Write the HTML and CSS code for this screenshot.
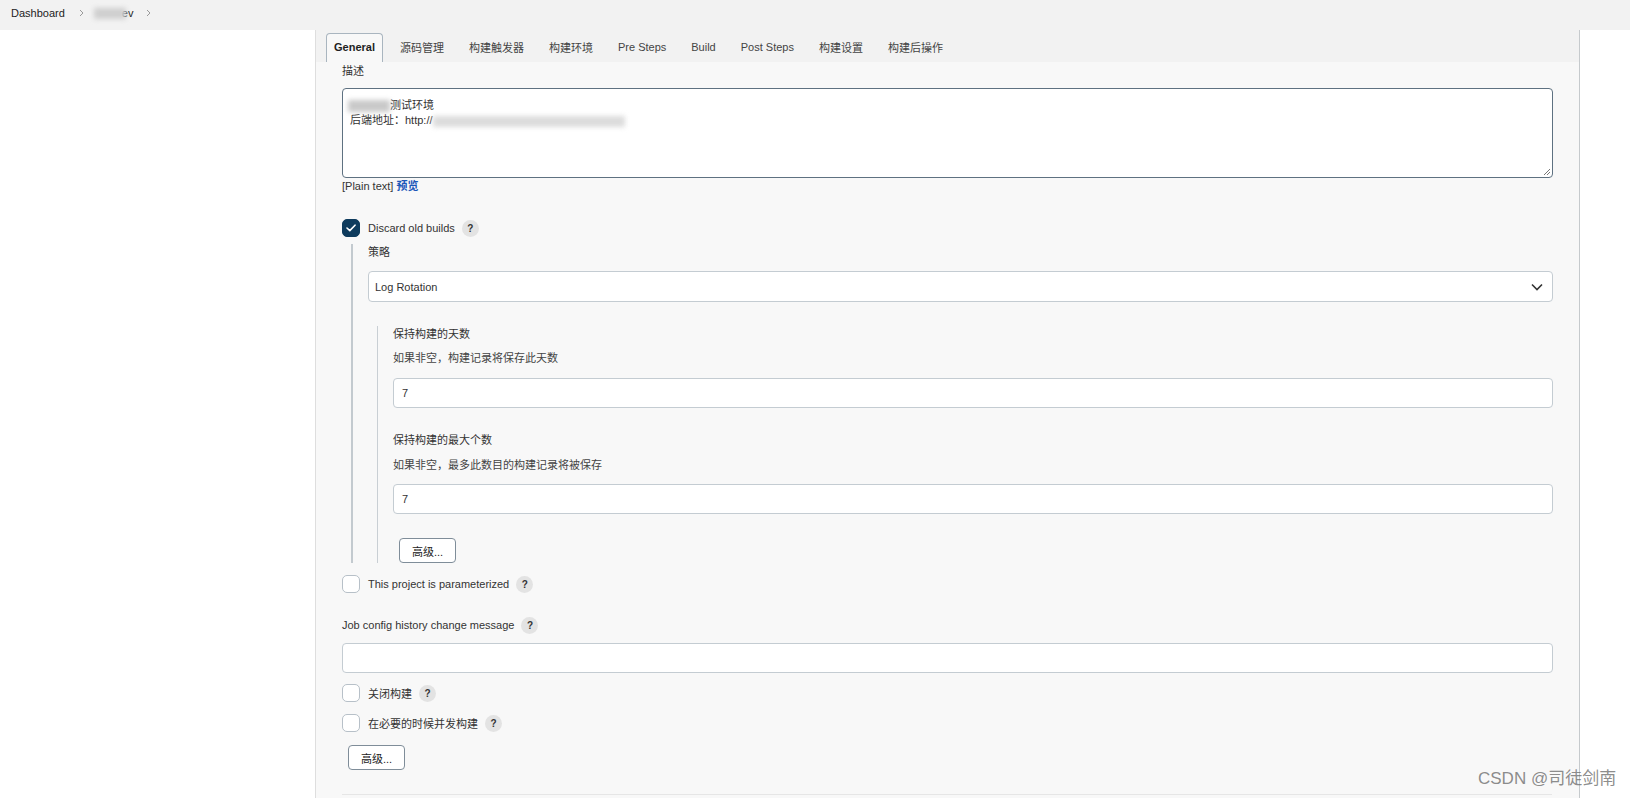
FILE: index.html
```html
<!DOCTYPE html>
<html lang="zh-CN">
<head>
<meta charset="utf-8">
<title>Jenkins 配置</title>
<link rel="stylesheet" href="styles.css">
</head>
<body>
<header class="crumbs">
  <span class="crumb">Dashboard</span>
  <svg class="sep" width="5" height="8" viewBox="0 0 5 8"><path d="M1 1 L4 4 L1 7" fill="none" stroke="#9a9a9a" stroke-width="1"/></svg>
  <span class="crumb job"><span class="blur b-crumb"></span>ev</span>
  <svg class="sep sep2" width="5" height="8" viewBox="0 0 5 8"><path d="M1 1 L4 4 L1 7" fill="none" stroke="#9a9a9a" stroke-width="1"/></svg>
</header>
<div class="main">
  <div class="panel">
    <nav class="tabs">
      <span class="tab active">General</span>
      <span class="tab">源码管理</span>
      <span class="tab">构建触发器</span>
      <span class="tab">构建环境</span>
      <span class="tab">Pre Steps</span>
      <span class="tab">Build</span>
      <span class="tab">Post Steps</span>
      <span class="tab">构建设置</span>
      <span class="tab">构建后操作</span>
    </nav>
    <div class="body">
      <div class="label">描述</div>
      <div class="textarea">
        <div class="line"><span class="blur b-t1"></span>测试环境</div>
        <div class="line">后端地址：http://<span class="blur b-t2"></span></div>
        <svg class="grip" width="9" height="9" viewBox="0 0 9 9"><path d="M8 2 L2 8 M8 5 L5 8" stroke="#777" stroke-width="1" fill="none"/></svg>
      </div>
      <div class="plain">[Plain text] <a class="link">预览</a></div>

      <div class="check-row r-discard">
        <span class="cb checked"><svg width="10" height="8" viewBox="0 0 10 8"><path d="M1 4 L3.8 6.6 L9 1.2" fill="none" stroke="#fff" stroke-width="1.6" stroke-linecap="round" stroke-linejoin="round"/></svg></span>
        <span class="cb-label">Discard old builds</span>
        <span class="help">?</span>
      </div>
      <div class="nested outer">
        <div class="label">策略</div>
        <div class="select">
          <span>Log Rotation</span>
          <svg width="12" height="8" viewBox="0 0 12 8"><path d="M1 1.5 L6 6.5 L11 1.5" fill="none" stroke="#333" stroke-width="1.6"/></svg>
        </div>
        <div class="nested inner">
          <div class="label">保持构建的天数</div>
          <div class="hint">如果非空，构建记录将保存此天数</div>
          <div class="input i-days">7</div>
          <div class="label l-max">保持构建的最大个数</div>
          <div class="hint h-max">如果非空，最多此数目的构建记录将被保存</div>
          <div class="input i-max">7</div>
          <button class="btn b-adv1">高级...</button>
        </div>
      </div>

      <div class="check-row r-param">
        <span class="cb"></span>
        <span class="cb-label">This project is parameterized</span>
        <span class="help">?</span>
      </div>

      <div class="field-label">
        <span>Job config history change message</span>
        <span class="help">?</span>
      </div>
      <div class="input i-msg"></div>

      <div class="check-row r-disable">
        <span class="cb"></span>
        <span class="cb-label">关闭构建</span>
        <span class="help">?</span>
      </div>
      <div class="check-row r-concurrent">
        <span class="cb"></span>
        <span class="cb-label">在必要的时候并发构建</span>
        <span class="help">?</span>
      </div>
      <button class="btn b-adv2">高级...</button>
      <div class="divider"></div>
    </div>
  </div>
</div>
<div class="watermark">CSDN @司徒剑南</div>
</body>
</html>
```

FILE: styles.css
```css
html, body {
  margin: 0;
  padding: 0;
}
body {
  font-family: "Liberation Sans", "Noto Sans CJK SC", sans-serif;
  font-size: 11px;
  color: #333;
  background: #fff;
  overflow: hidden;
}

/* breadcrumb */
.crumbs {
  height: 30px;
  box-sizing: border-box;
  background: #f2f2f2;
  display: flex;
  align-items: center;
  padding: 0 0 4px 11px;
}
.crumb {
  color: #222;
  line-height: 14px;
}
.sep {
  margin: 0 0 0 14px;
}
.job {
  margin-left: 10px;
  display: flex;
  align-items: center;
}
.sep2 {
  margin-left: 13px;
}
.blur {
  display: inline-block;
  background: #cfcfcf;
  filter: blur(2.5px);
  vertical-align: middle;
}
.b-crumb {
  width: 32px;
  height: 11px;
  margin-right: -4px;
}

/* layout */
.main {
  display: flex;
}
.panel {
  margin-left: 315px;
  width: 1265px;
  box-sizing: border-box;
  border-left: 1px solid #dedede;
  border-right: 1px solid #c6cacd;
  background: #f8f8f8;
  height: 768px;
}

/* tabs */
.tabs {
  height: 32px;
  box-sizing: border-box;
  background: #f2f2f2;
  display: flex;
  align-items: flex-end;
  gap: 9px;
  padding-left: 10px;
}
.tab {
  height: 29px;
  box-sizing: border-box;
  padding: 0 7px 2px 7px;
  display: flex;
  align-items: center;
  color: #444;
  border: 1px solid transparent;
  border-bottom: none;
  border-radius: 4px 4px 0 0;
}
.tab.active {
  background: #f8f8f8;
  border-color: #a9b5bf;
  color: #1e1e1e;
  font-weight: bold;
}

/* body */
.body {
  padding: 2px 26px 0 26px;
}
.label {
  line-height: 14px;
  color: #333;
}
.textarea {
  margin-top: 10px;
  height: 90px;
  box-sizing: border-box;
  border: 1px solid #5e7181;
  border-radius: 4px;
  background: #fff;
  padding: 9px 7px 7px 7px;
  line-height: 15px;
  position: relative;
  color: #333;
}
.b-t1 {
  width: 42px;
  height: 12px;
  margin-left: -2px;
  background: #c9c9c9;
}
.b-t2 {
  width: 192px;
  height: 11px;
  background: #dcdcdc;
}
.grip {
  position: absolute;
  right: 1px;
  bottom: 1px;
}
.plain {
  margin-top: 1px;
  line-height: 14px;
  color: #333;
}
.link {
  color: #1b57b8;
  font-weight: bold;
}

/* checkbox rows */
.check-row {
  display: flex;
  align-items: center;
  height: 18px;
}
.cb {
  width: 18px;
  height: 18px;
  box-sizing: border-box;
  border: 1px solid #b7c0c8;
  border-radius: 5px;
  background: #fff;
  display: flex;
  align-items: center;
  justify-content: center;
  flex: none;
}
.cb.checked {
  background: #0e3b5d;
  border-color: #0e3b5d;
}
.cb-label {
  margin-left: 8px;
  color: #333;
}
.help {
  width: 17px;
  height: 17px;
  border-radius: 50%;
  background: #e3e3e3;
  color: #333;
  font-weight: bold;
  font-size: 10px;
  display: flex;
  align-items: center;
  justify-content: center;
  margin-left: 7px;
  flex: none;
}
.r-discard {
  margin-top: 26px;
}

/* nested sections */
.nested {
  margin-left: 9px;
  padding-left: 15px;
}
.outer {
  margin-top: 7px;
  padding-top: 1px;
  border-left: 2px solid #c3cacf;
}
.inner {
  margin-top: 24px;
  padding-top: 1px;
  border-left: 1px solid #c9cfd4;
}
.select {
  margin-top: 12px;
  height: 31px;
  box-sizing: border-box;
  border: 1px solid #c4ccd2;
  border-radius: 4px;
  background: #fff;
  display: flex;
  align-items: center;
  justify-content: space-between;
  padding: 0 9px 0 6px;
  color: #333;
}
.hint {
  margin-top: 10px;
  line-height: 14px;
  color: #444;
}
.input {
  height: 30px;
  box-sizing: border-box;
  border: 1px solid #c4ccd2;
  border-radius: 4px;
  background: #fff;
  padding: 0 8px;
  display: flex;
  align-items: center;
  color: #333;
}
.i-days {
  margin-top: 13px;
}
.l-max {
  margin-top: 25px;
}
.h-max {
  margin-top: 11px;
}
.i-max {
  margin-top: 12px;
}
.btn {
  display: block;
  width: 57px;
  height: 25px;
  box-sizing: border-box;
  border: 1px solid #7f8d99;
  border-radius: 4px;
  background: #fff;
  font-family: "Liberation Sans", "Noto Sans CJK SC", sans-serif;
  font-size: 11px;
  color: #222;
  padding: 0;
  margin-left: 6px;
}
.b-adv1 {
  margin-top: 24px;
}
.r-param {
  margin-top: 12px;
}
.field-label {
  margin-top: 23px;
  height: 18px;
  display: flex;
  align-items: center;
  color: #333;
}
.i-msg {
  margin-top: 9px;
}
.r-disable {
  margin-top: 11px;
}
.r-concurrent {
  margin-top: 12px;
}
.b-adv2 {
  margin-top: 13px;
}
.divider {
  margin-top: 24px;
  margin-right: 1px;
  border-top: 1px solid #e6e6e6;
}

/* watermark */
.watermark {
  position: absolute;
  left: 1478px;
  top: 769px;
  font-family: "Liberation Sans", "Noto Sans CJK SC", sans-serif;
  font-size: 17px;
  line-height: 20px;
  color: rgba(110, 110, 110, 0.8);
  white-space: nowrap;
}
```
